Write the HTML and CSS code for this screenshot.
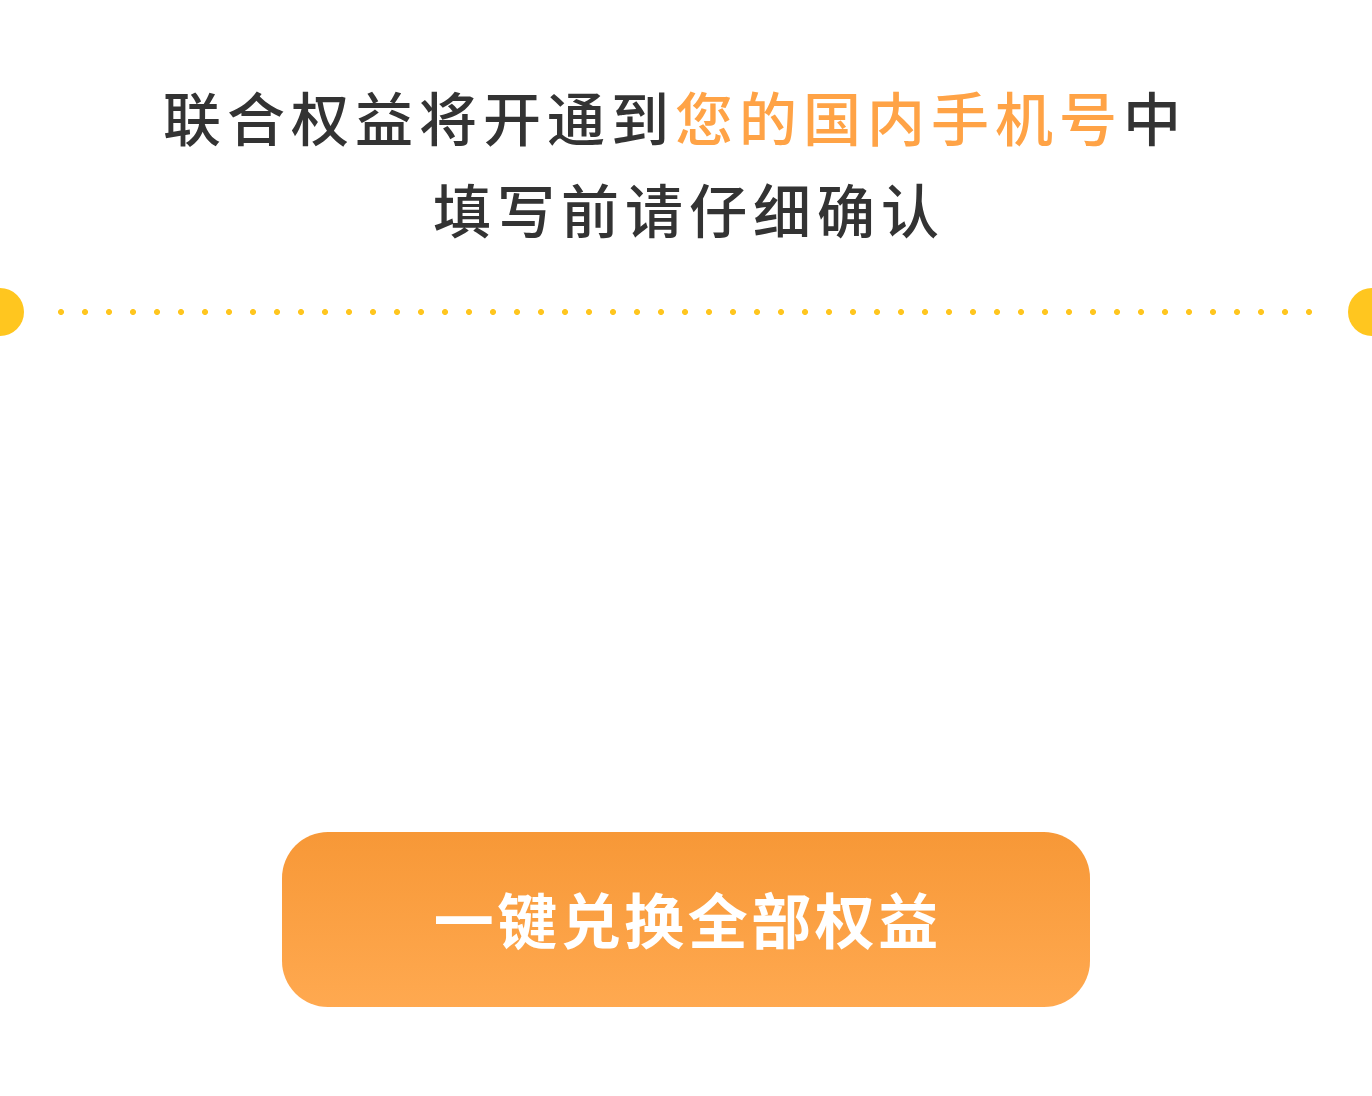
FILE: index.html
```html
<!DOCTYPE html>
<html lang="zh-CN">
<head>
<meta charset="utf-8">
<title>联合权益</title>
<link rel="stylesheet" href="styles.css">
</head>
<body>
<main class="page">
  <h1 class="title">
    <span class="line line-first">联合权益将开通到<span class="hl">您的国内手机号</span>中</span>
    <span class="line">填写前请仔细确认</span>
  </h1>
  <div class="divider">
    <span class="notch notch-left"></span>
    <span class="dots"></span>
    <span class="notch notch-right"></span>
  </div>
  <div class="spacer"></div>
  <div class="action">
    <button class="btn" type="button">一键兑换全部权益</button>
  </div>
</main>
</body>
</html>
```

FILE: styles.css
```css
html, body {
  margin: 0;
  padding: 0;
  background: #ffffff;
}
body {
  font-family: "Noto Sans CJK SC", "Noto Sans", sans-serif;
}
.page {
  width: 1372px;
  height: 1096px;
  padding-top: 70px;
  box-sizing: border-box;
  display: flex;
  flex-direction: column;
}
.title {
  margin: 0;
  display: flex;
  flex-direction: column;
  align-items: center;
  font-size: 58px;
  font-weight: 500;
  line-height: 92px;
  letter-spacing: 6px;
  color: #333333;
}
.line {
  display: block;
  padding-left: 6px;
}
.line-first {
  padding-left: 0;
  padding-right: 22px;
}
.hl {
  color: #ffa346;
}
.divider {
  margin-top: 34px;
  height: 48px;
  display: flex;
  align-items: center;
}
.notch {
  width: 24px;
  height: 48px;
  background: #ffc61f;
  flex: none;
}
.notch-left {
  border-radius: 0 24px 24px 0;
}
.notch-right {
  border-radius: 24px 0 0 24px;
}
.dots {
  flex: 1;
  margin: 0 25px;
  height: 6px;
  background-image: radial-gradient(circle at 12px 3px, #ffc61f 2.6px, rgba(255, 198, 31, 0) 3.4px);
  background-size: 24px 6px;
  background-repeat: repeat-x;
}
.spacer {
  height: 496px;
  flex: none;
}
.action {
  display: flex;
  justify-content: center;
}
.btn {
  width: 808px;
  height: 175px;
  border: 0;
  border-radius: 46px;
  background: linear-gradient(180deg, #f79837 0%, #ffa950 100%);
  color: #ffffff;
  font-family: "Noto Sans CJK SC", "Noto Sans", sans-serif;
  font-size: 60px;
  font-weight: 700;
  letter-spacing: 3.5px;
  padding: 0 0 4px 3.5px;
  cursor: pointer;
}
```
